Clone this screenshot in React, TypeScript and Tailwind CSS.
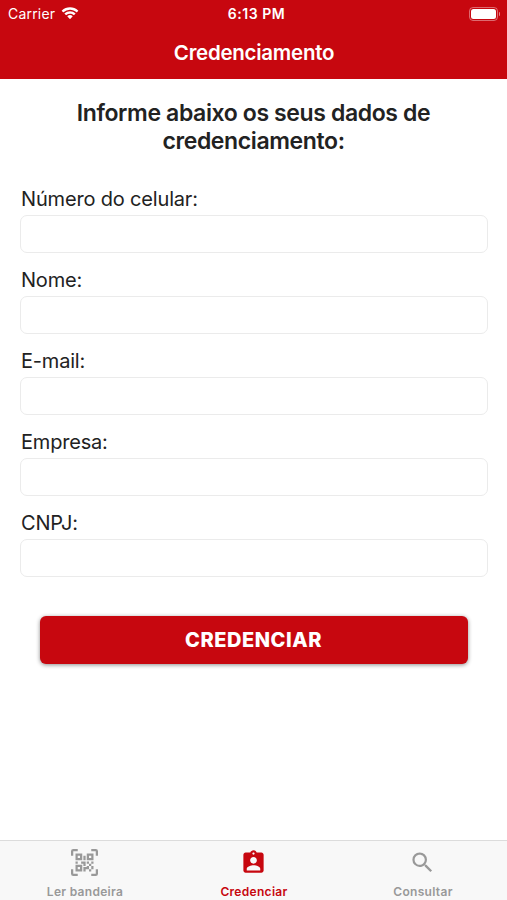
import React, { useState } from 'react';
import { MdAssignmentInd, MdSearch } from 'react-icons/md';

const fields = [
  { id: 'celular', label: 'Número do celular:', type: 'tel', tracking: 'tracking-[-0.17px]' },
  { id: 'nome', label: 'Nome:', type: 'text', tracking: 'tracking-[-0.2px]' },
  { id: 'email', label: 'E-mail:', type: 'email', tracking: 'tracking-[-0.2px]' },
  { id: 'empresa', label: 'Empresa:', type: 'text', tracking: 'tracking-[-0.2px]' },
  { id: 'cnpj', label: 'CNPJ:', type: 'text', tracking: 'tracking-[-0.2px]' },
];

const QrScanIcon = ({ className }: { className?: string }) => (
  <svg viewBox="0 0 24 24" fill="currentColor" className={className}>
    <path d="M4,4H10V10H4V4M20,4V10H14V4H20M14,15H16V13H14V11H16V13H18V11H20V13H18V15H20V18H18V20H16V18H13V20H11V16H14V15M16,15V18H18V15H16M4,20V14H10V20H4M6,6V8H8V6H6M16,6V8H18V6H16M6,16V18H8V16H6M4,11H6V13H4V11M9,11H13V15H11V13H9V11M11,6H13V10H11V6M2,2V6H0V2A2,2 0 0,1 2,0H6V2H2M22,0A2,2 0 0,1 24,2V6H22V2H18V0H22M2,18V22H6V24H2A2,2 0 0,1 0,22V18H2M22,22V18H24V22A2,2 0 0,1 22,24H18V22H22Z" />
  </svg>
);

const WifiIcon = () => (
  <svg viewBox="0 0 17 12" fill="currentColor" className="w-[18px] h-[13px]">
    <path d="M8.5 2.4c2.3 0 4.5.9 6.1 2.5.1.1.3.1.4 0l1.2-1.2c.1-.1.1-.3 0-.5a11 11 0 0 0-15.4 0c-.1.2-.1.4 0 .5L2 4.9c.1.1.3.1.4 0a8.8 8.8 0 0 1 6.1-2.5z" />
    <path d="M8.5 6.2c1.3 0 2.5.5 3.4 1.3.1.1.3.1.5 0l1.2-1.2c.1-.1.1-.3 0-.5a7.4 7.4 0 0 0-10.2 0c-.1.2-.1.4 0 .5l1.2 1.2c.2.1.4.1.5 0a5 5 0 0 1 3.4-1.3z" />
    <path d="M10.9 8.9c.1-.1.1-.3 0-.5a3.700 3.700 0 0 0-4.800 0c-.1.2-.1.4 0 .5l2.200 2.200c.1.1.3.1.4 0z" />
  </svg>
);

const StatusBar = () => (
  <div className="grid grid-cols-3 items-center h-[27px] pl-2 pr-[7px] text-[14px]">
    <div className="flex items-center gap-[6px]">
      <span className="tracking-[0.2px]">Carrier</span>
      <WifiIcon />
    </div>
    <span className="text-center font-semibold tracking-[0.55px] pl-[5px]">6:13 PM</span>
    <div className="flex items-center justify-end gap-px">
      <div className="w-[29px] h-[14px] rounded-[4px] border border-white/40 p-px">
        <div className="w-full h-full rounded-[2.5px] bg-white" />
      </div>
      <div className="w-[1.5px] h-1 rounded-r-full bg-white/50" />
    </div>
  </div>
);

const tabs = [
  { label: 'Ler bandeira', icon: <QrScanIcon className="w-[27px] h-[27px]" /> },
  { label: 'Credenciar', icon: <MdAssignmentInd className="w-[27px] h-[27px]" /> },
  { label: 'Consultar', icon: <MdSearch className="w-[27px] h-[27px]" /> },
];

export default function App() {
  const [active, setActive] = useState(1);

  return (
    <div className="flex flex-col w-full h-screen overflow-hidden bg-white font-['Inter',sans-serif] text-[#222]">
      <header className="shrink-0 h-[79px] bg-[#c7070f] text-white">
        <StatusBar />
        <h1 className="h-[51px] leading-[51px] pl-px text-center text-[20.5px] font-semibold tracking-[-0.27px]">
          Credenciamento
        </h1>
      </header>

      <main className="flex-1 px-5 pt-5">
        <h2 className="text-center text-[23px] leading-7 font-semibold tracking-[-0.38px]">
          Informe abaixo os seus dados de
          <br />
          credenciamento:
        </h2>

        <form className="mt-[31px]" onSubmit={(e) => e.preventDefault()}>
          {fields.map((field) => (
            <div key={field.id} className="h-[81px]">
              <label htmlFor={field.id} className={`block h-[29px] leading-[27px] pl-px text-[20px] ${field.tracking}`}>
                {field.label}
              </label>
              <input
                id={field.id}
                type={field.type}
                className="block w-[468px] h-[38px] px-3 rounded-[7px] border border-[#ebebeb] outline-none"
              />
            </div>
          ))}

          <button className="block w-[428px] h-12 mt-[25px] mx-auto rounded-[6px] bg-[#c7070f] text-white text-[20px] font-extrabold tracking-[0.55px] shadow-[0_1px_4px_rgba(0,0,0,0.45)]">
            CREDENCIAR
          </button>
        </form>
      </main>

      {/* Tab bar */}
      <nav className="shrink-0 grid grid-cols-3 h-[60px] bg-[#f8f8f8] border-t border-[#dcdcdc]">
        {tabs.map((tab, i) => (
          <button
            key={tab.label}
            onClick={() => setActive(i)}
            className={`flex flex-col items-center pt-2 text-[12px] font-semibold tracking-[0.3px] ${
              i === active ? 'text-[#c7070f]' : 'text-[#999]'
            }`}
          >
            {tab.icon}
            <span className="mt-2 pl-px leading-4">{tab.label}</span>
          </button>
        ))}
      </nav>
    </div>
  );
}
